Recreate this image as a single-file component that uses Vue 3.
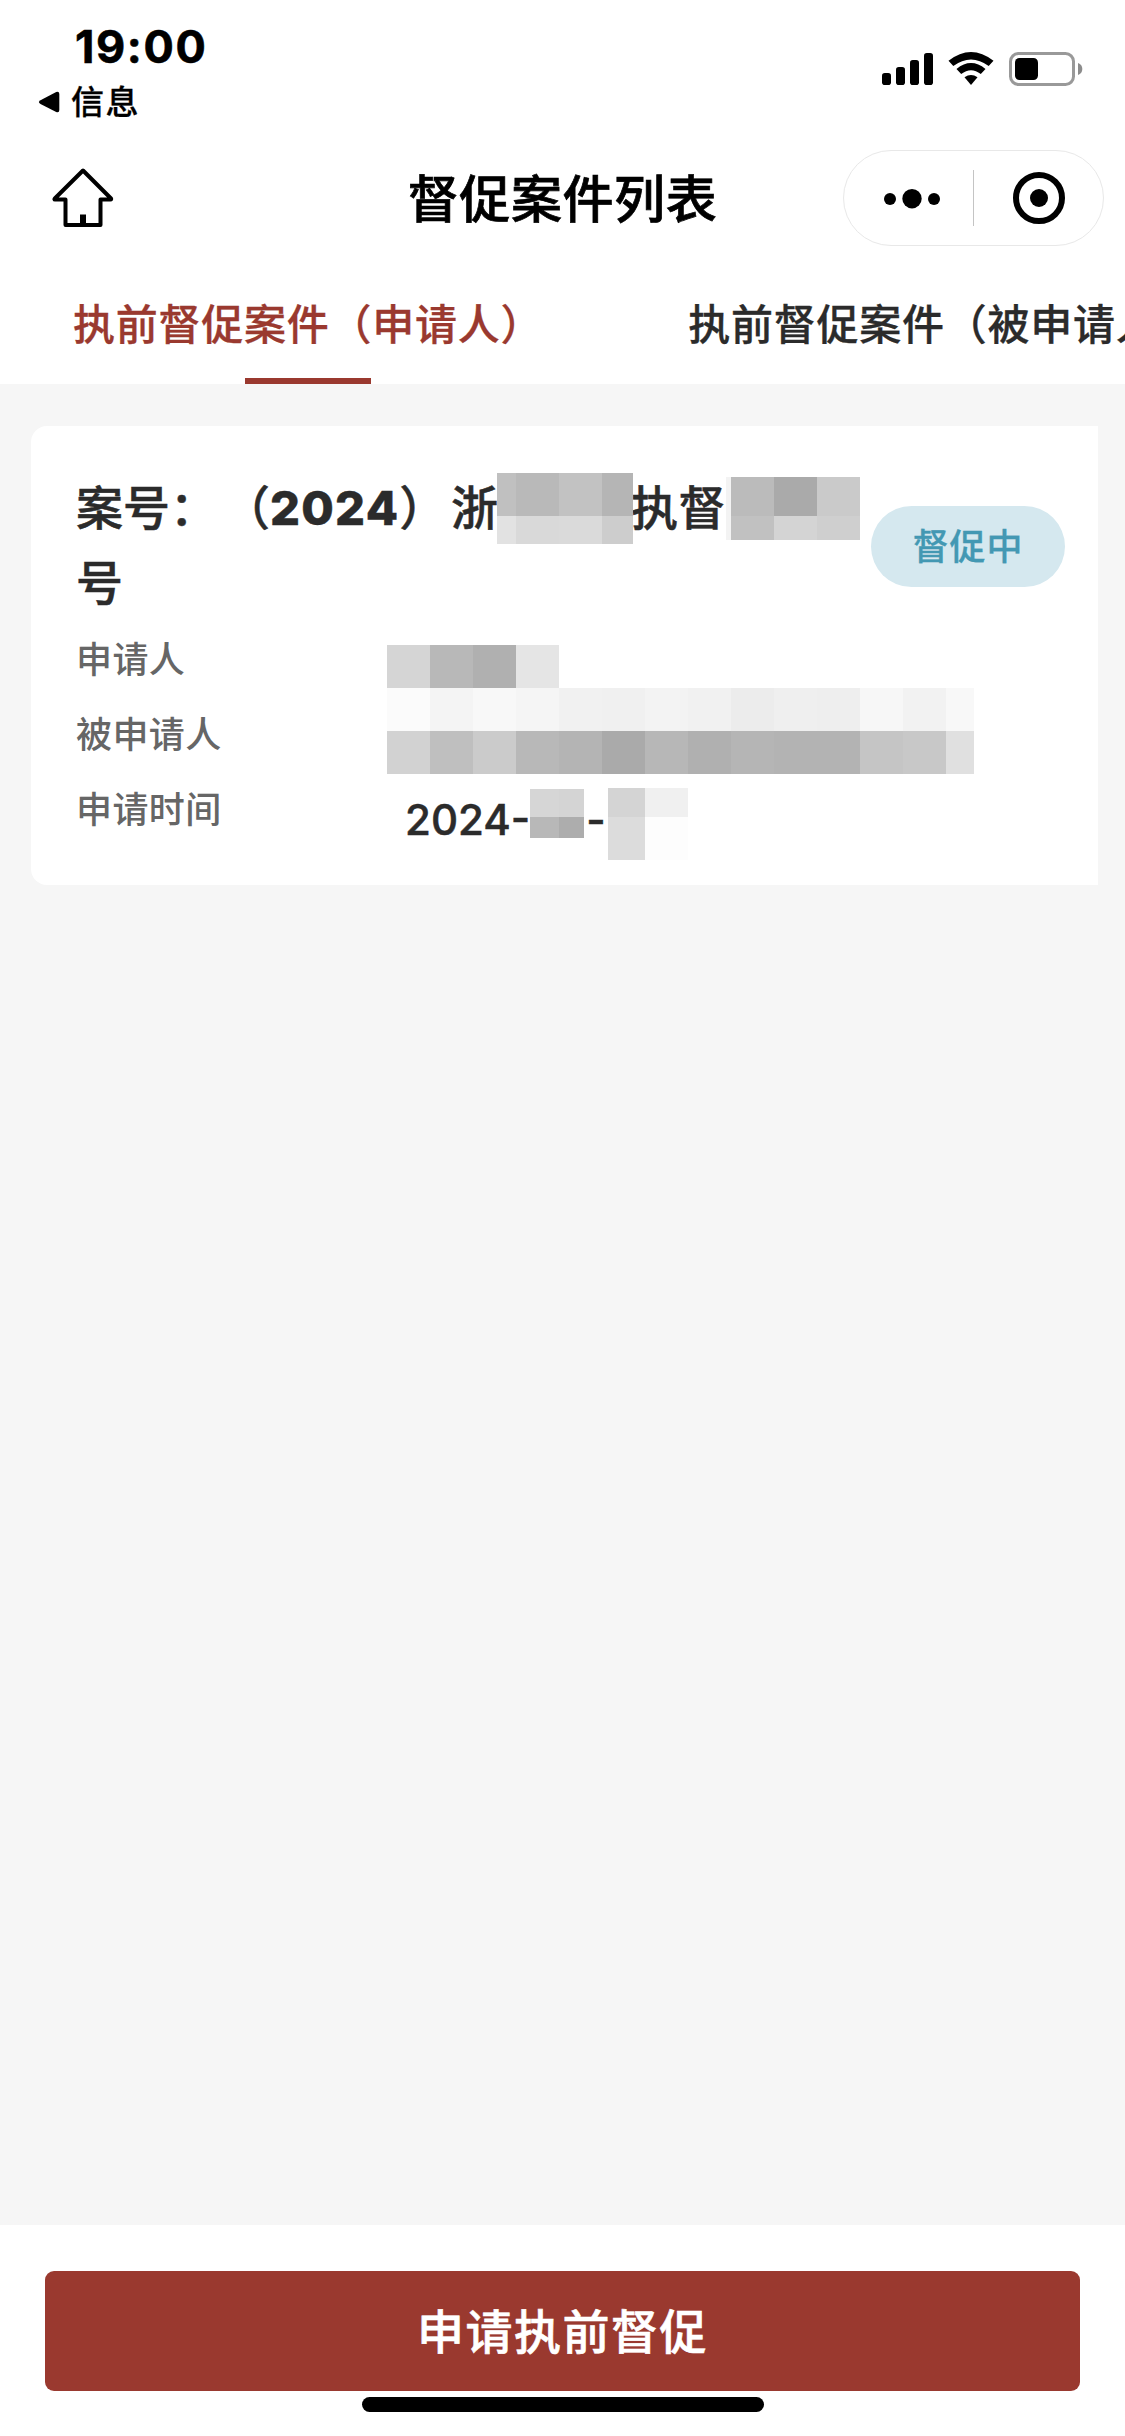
<script setup>
const masks = {
  court: {
    cols: [19, 43, 43, 31],
    rows: [43, 28],
    cells: ['#c0c0c0', '#b9b9b9', '#c2c2c2', '#b5b5b5', '#e2e2e2', '#d9d9d9', '#dadada', '#cdcdcd'],
  },
  number: {
    cols: [5, 43, 43, 43],
    rows: [39, 24],
    cells: ['#f3f3f3', '#bbbbbb', '#aaaaaa', '#cacaca', '#f3f3f3', '#c1c1c1', '#d4d4d4', '#cfcfcf'],
  },
  applicant: {
    cols: [43, 43, 43, 43],
    rows: [43],
    cells: ['#d5d5d5', '#b8b8b8', '#b0b0b0', '#e5e5e5'],
  },
  respondent: {
    cols: [43, 43, 43, 43, 43, 43, 43, 43, 43, 43, 43, 43, 43, 28],
    rows: [43, 43],
    cells: [
      '#fbfbfb', '#f4f4f4', '#f8f8f8', '#f5f5f5', '#f1f1f1', '#f0f0f0', '#f3f3f3',
      '#f1f1f1', '#ececec', '#efefef', '#eeeeee', '#f7f7f7', '#f2f2f2', '#f8f8f8',
      '#d2d2d2', '#bfbfbf', '#cbcbcb', '#b8b8b8', '#b4b4b4', '#aaaaaa', '#b7b7b7',
      '#b0b0b0', '#b5b5b5', '#b3b3b3', '#b3b3b3', '#c5c5c5', '#c8c8c8', '#e0e0e0',
    ],
  },
  month: {
    cols: [29, 25],
    rows: [28, 21],
    cells: ['#d6d6d6', '#d4d4d4', '#b8b8b8', '#adadad'],
  },
  day: {
    cols: [37, 43],
    rows: [29, 43],
    cells: ['#d4d4d4', '#f0f0f0', '#dcdcdc', '#fdfdfd'],
  },
}

const px = (list) => list.map((n) => n + 'px').join(' ')
const gridOf = (m) => ({ gridTemplateColumns: px(m.cols), gridTemplateRows: px(m.rows) })
</script>

<template>
  <div class="page">
    <header class="status">
      <div class="status-left">
        <div class="time">19:00</div>
        <div class="back">
          <svg width="22" height="22" viewBox="0 0 22 22"><path d="M2.5 9.2 18.2.9Q21.3 0 21.3 3V19Q21.3 22 18.2 21L2.500 12.900Q-.7 11 2.500 9.200Z" /></svg>
          <span>信息</span>
        </div>
      </div>
      <svg class="status-icons" width="202" height="36" viewBox="0 0 202 36">
        <rect x="0" y="22" width="9" height="12" rx="2.800" />
        <rect x="14" y="16" width="9" height="18" rx="2.800" />
        <rect x="28" y="9" width="9" height="25" rx="2.800" />
        <rect x="42" y="2" width="9" height="32" rx="2.800" />
        <path d="M66.500 9.800Q89 -7.800 111.500 9.800L106.700 15Q89 1.800 71.300 15Z" />
        <path d="M74.500 18Q89 6.200 103.500 18L98.800 23Q89 15.300 79.200 23Z" />
        <path d="M82.500 26.300Q89 21.500 95.500 26.300L89 34Z" />
        <rect x="128.500" y="2.500" width="63" height="31" rx="8" fill="none" stroke="#999" stroke-width="3" />
        <rect x="133" y="7" width="23" height="22" rx="4.500" />
        <path d="M196 12Q200.300 13.500 200.300 18T196 24Z" fill="#8c8c8c" />
      </svg>
    </header>

    <nav class="navbar">
      <svg class="home" width="62" height="60" viewBox="0 0 62 60">
        <path d="M31 2.500 59 30.500Q59.500 31.500 58.500 31.500H48.500V57H13.500V31.500H3Q2 31.500 2.800 30.500Z" fill="none" stroke="#000" stroke-width="4" stroke-linejoin="round" />
        <rect x="28" y="46.500" width="6" height="10.500" />
      </svg>
      <h1>督促案件列表</h1>
      <div class="capsule">
        <svg width="261" height="96" viewBox="0 0 261 96">
          <circle cx="47" cy="49" r="6" />
          <circle cx="69" cy="48.700" r="9.700" />
          <circle cx="91" cy="49" r="6" />
          <rect x="130" y="20" width="1" height="56" fill="#c4c4c4" />
          <circle cx="196" cy="48" r="23" fill="none" stroke="#000" stroke-width="6" />
          <circle cx="196" cy="48" r="9" />
        </svg>
      </div>
    </nav>

    <div class="tabs">
      <div class="tab active"><span>执前督促案件（申请人）</span></div>
      <div class="tab"><span>执前督促案件（被申请人）</span></div>
    </div>

    <main class="content">
      <section class="card">
        <div class="card-head">
          <div class="case">
            <div class="case-line">
              <div class="case-start">
                <span class="case-label">案号：</span>
                <span>（</span><b>2024</b><span>）</span><span class="province">浙</span>
              </div>
              <div class="mask court" :style="gridOf(masks.court)">
                <i v-for="(c, n) in masks.court.cells" :key="n" :style="{ background: c }"></i>
              </div>
              <span class="case-kind">执督</span>
              <div class="mask number" :style="gridOf(masks.number)">
                <i v-for="(c, n) in masks.number.cells" :key="n" :style="{ background: c }"></i>
              </div>
            </div>
            <div class="case-line">号</div>
          </div>
          <div class="badge">督促中</div>
        </div>
        <div class="details">
          <div class="labels">
            <div>申请人</div>
            <div>被申请人</div>
            <div>申请时间</div>
          </div>
          <div class="values">
            <div class="mask" :style="gridOf(masks.applicant)">
              <i v-for="(c, n) in masks.applicant.cells" :key="n" :style="{ background: c }"></i>
            </div>
            <div class="mask" :style="gridOf(masks.respondent)">
              <i v-for="(c, n) in masks.respondent.cells" :key="n" :style="{ background: c }"></i>
            </div>
            <div class="date">
              <span class="year">2024-</span>
              <div class="mask month" :style="gridOf(masks.month)">
                <i v-for="(c, n) in masks.month.cells" :key="n" :style="{ background: c }"></i>
              </div>
              <span class="dash">-</span>
              <div class="mask day" :style="gridOf(masks.day)">
                <i v-for="(c, n) in masks.day.cells" :key="n" :style="{ background: c }"></i>
              </div>
            </div>
          </div>
        </div>
      </section>
    </main>

    <footer class="footer">
      <button class="apply">申请执前督促</button>
      <div class="indicator"></div>
    </footer>
  </div>
</template>

<style>
body {
  margin: 0;
  background: #fff;
}
</style>

<style scoped>
.page {
  width: 1125px;
  height: 2436px;
  display: flex;
  flex-direction: column;
  overflow: hidden;
  background: #fff;
  color: #2b2b2b;
  font-family: Inter, "Noto Sans CJK SC", sans-serif;
  white-space: nowrap;
}
.status {
  height: 150px;
  display: flex;
  justify-content: space-between;
  color: #000;
}
.status-left {
  padding: 20px 0 0 38px;
}
.time {
  padding-left: 37px;
  font-size: 45px;
  line-height: 54px;
  font-weight: 700;
  letter-spacing: 1.6px;
  -webkit-text-stroke: 0.6px;
}
.back {
  display: flex;
  align-items: center;
  gap: 11px;
  height: 56px;
  font-size: 33px;
  font-weight: 500;
  letter-spacing: 1.5px;
  -webkit-text-stroke: 0.3px;
}
.back span {
  line-height: 40px;
}
.status-icons {
  margin: 51px 41px 0 0;
}
.navbar {
  height: 96px;
  display: flex;
  align-items: center;
  justify-content: space-between;
  padding: 0 21px 0 52px;
  color: #000;
}
.home {
  margin-right: 168px;
}
h1 {
  margin: 0;
  padding-top: 3px;
  font-size: 51px;
  line-height: 93px;
  font-weight: 500;
  letter-spacing: 0.6px;
  -webkit-text-stroke: 0.7px;
}
.capsule {
  box-sizing: border-box;
  width: 261px;
  height: 96px;
  border: 1px solid #e8e8e8;
  border-radius: 48px;
}
.capsule svg {
  display: block;
  margin: -1px;
}
.tabs {
  height: 138px;
  display: flex;
  overflow: hidden;
  font-size: 42px;
  font-weight: 500;
  letter-spacing: 0.75px;
  -webkit-text-stroke: 0.3px;
}
.tab {
  flex: none;
  display: flex;
  flex-direction: column;
  align-items: center;
  padding: 0 72px 0 73px;
}
.tab span {
  box-sizing: border-box;
  height: 132px;
  padding-top: 26px;
  line-height: 106px;
}
.tab.active {
  color: #9a392f;
}
.tab.active::after {
  content: "";
  width: 126px;
  height: 6px;
  background: #9a392f;
}
.content {
  height: 1841px;
  background: #f6f6f6;
  padding: 42px 27px 0 31px;
  box-sizing: border-box;
}
.card {
  height: 459px;
  box-sizing: border-box;
  border-radius: 16px 0 0 16px;
  background: #fff;
  padding: 45px 33px 0 45px;
}
.card-head {
  height: 150px;
  display: flex;
  align-items: center;
  justify-content: space-between;
}
.case {
  font-size: 47px;
  font-weight: 500;
  -webkit-text-stroke: 0.5px;
}
.case-line {
  height: 75px;
  line-height: 73px;
  display: flex;
}
.case-start {
  width: 422px;
  margin-right: -1px;
  display: flex;
}
.case-label {
  margin-right: 6px;
}
.case b {
  font-weight: 800;
  letter-spacing: 1.3px;
}
.province {
  margin-left: auto;
}
.mask {
  display: grid;
  width: max-content;
}
.court {
  position: relative;
  margin-top: 2px;
}
.case-kind {
  width: 95px;
  margin-left: -2px;
  letter-spacing: 0.6px;
}
.number {
  margin-top: 6px;
}
.badge {
  box-sizing: border-box;
  width: 194px;
  height: 81px;
  padding-top: 2px;
  line-height: 79px;
  border-radius: 41px;
  background: #d5e8ef;
  color: #4398b3;
  font-size: 36px;
  font-weight: 500;
  letter-spacing: 0.8px;
  text-align: center;
  -webkit-text-stroke: 0.3px;
}
.details {
  display: flex;
}
.labels {
  width: 311px;
  padding-top: 2px;
  color: #666;
  font-size: 36px;
  font-weight: 500;
  letter-spacing: 0.4px;
  line-height: 75px;
}
.values {
  padding-top: 24px;
}
.date {
  display: flex;
  padding: 14px 0 0 18px;
  font-size: 42px;
  font-weight: 500;
  line-height: 63px;
  -webkit-text-stroke: 0.5px;
}
.year {
  width: 125px;
}
.dash {
  width: 24px;
  text-align: center;
}
.month {
  margin-top: 1px;
}
.footer {
  flex: 1;
  padding: 46px 45px 0;
  display: flex;
  flex-direction: column;
  align-items: center;
}
.apply {
  width: 100%;
  height: 120px;
  padding: 0 0 6px;
  border: 0;
  border-radius: 9px;
  background: #9a392f;
  color: #fff;
  font: inherit;
  font-size: 47px;
  font-weight: 500;
  letter-spacing: 1.5px;
  -webkit-text-stroke: 0.6px;
}
.indicator {
  width: 402px;
  height: 15px;
  margin-top: 6px;
  border-radius: 8px;
  background: #000;
}
</style>
